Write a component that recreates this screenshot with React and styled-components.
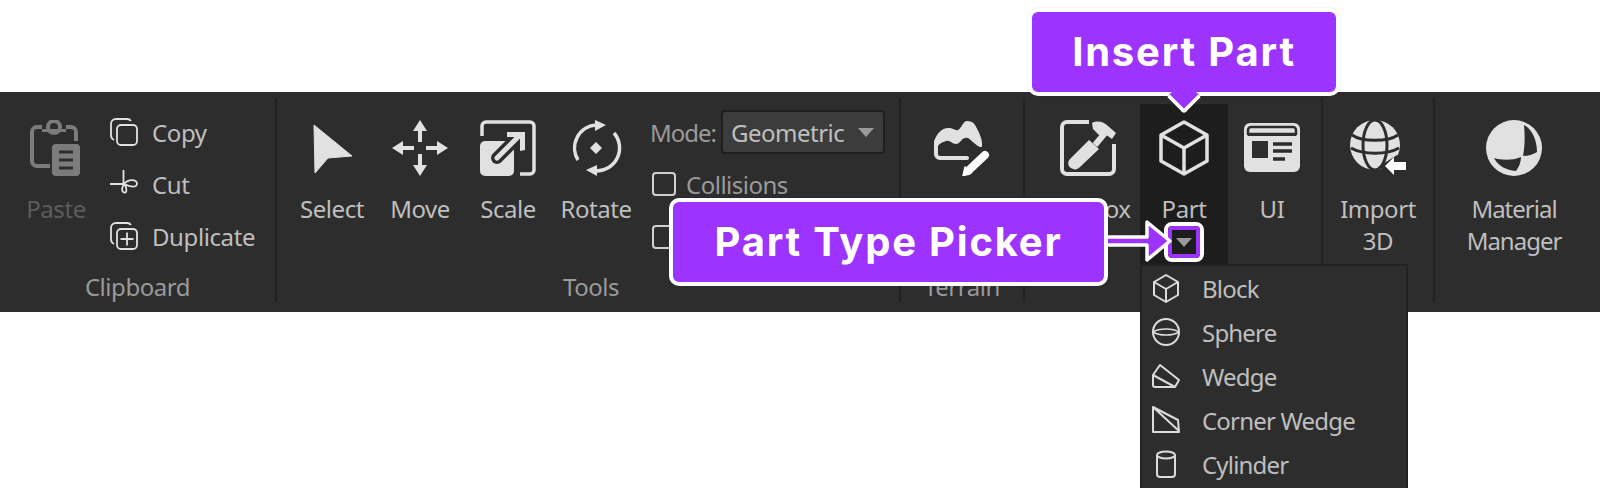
import React from "react";
import styled, {createGlobalStyle} from "styled-components";

const GlobalStyle = createGlobalStyle`
  html, body {
    margin: 0;
    background: #fff;
  }
`

const UI_FONT = `"Noto Sans", "Open Sans", sans-serif`;
const PURPLE = "#9c33ff";
const TEXT = "#bfbfbf";

const Page = styled.div`
  position: relative;
  width: 1600px;
  height: 488px;
  overflow: hidden;
  padding-top: 92px;
  box-sizing: border-box;
  font-family: ${UI_FONT};
`
const Ribbon = styled.div`
  display: flex;
  height: 220px;
  background: #2d2d2d;
`
const Group = styled.section`
  display: flex;
  flex-direction: column;
  justify-content: space-between;
  width: ${p => p.$width}px;
  flex: none;
`
const Divider = styled.div`
  flex: none;
  width: 2px;
  margin: 6px 0 10px;
  background: #222;
`
const GroupRow = styled.div`
  display: flex;
  padding-left: ${p => p.$left || 0}px;
`
const GroupLabel = styled.div`
  height: 30px;
  margin-bottom: 10px;
  padding-left: ${p => p.$shift || 0}px;
  text-align: center;
  font-size: 24px;
  line-height: 30px;
  letter-spacing: -0.45px;
  color: #9a9a9a;
`
const Tool = styled.div`
  display: flex;
  flex-direction: column;
  align-items: center;
  flex: none;
  box-sizing: border-box;
  width: ${p => p.$width || 88}px;
  height: ${p => (p.$active ? 160 : 172)}px;
  margin: ${p => (p.$active ? "12px 0 0" : "0")};
  padding-top: ${p => (p.$active ? 16 : 28)}px;
  margin-right: ${p => p.$gap || 0}px;
  background: ${p => (p.$active ? "#1d1d1d" : "transparent")};
`
const ToolIcon = styled.svg`
  display: block;
  flex: none;
  width: 56px;
  height: 56px;
  color: ${p => (p.$dim ? "#7c7c7c" : "#e1e1e1")};
`
const ToolText = styled.div`
  margin-top: 17px;
  text-align: center;
  font-size: 24px;
  line-height: 32px;
  letter-spacing: ${p => (p.$tight ? "-1px" : "-0.45px")};
  white-space: pre-line;
  color: ${p => (p.$dim ? "#5c5c5c" : TEXT)};
`
const ClipList = styled.div`
  display: flex;
  flex-direction: column;
  gap: 24px;
  margin: 26px 0 0 14px;
`
const ClipItem = styled.div`
  display: flex;
  align-items: center;
  gap: 14px;
  height: 28px;
  font-size: 24px;
  letter-spacing: -0.4px;
  color: ${TEXT};
`
const SmallIcon = styled.svg`
  display: block;
  flex: none;
  width: 28px;
  height: 28px;
  color: #e1e1e1;
`
const Settings = styled.div`
  display: flex;
  flex-direction: column;
  margin: 18px 0 0 10px;
`
const ModeRow = styled.div`
  display: flex;
  align-items: center;
  gap: 5px;
  height: 44px;
  font-size: 24px;
  letter-spacing: -1px;
  color: #9a9a9a;
`
const ModeSelect = styled.div`
  display: flex;
  align-items: center;
  justify-content: space-between;
  box-sizing: border-box;
  width: 164px;
  height: 44px;
  padding: 0 9px 0 8px;
  background: #3c3c3c;
  border: 2px solid #1f1f1f;
  border-radius: 4px;
  letter-spacing: -0.5px;
  color: ${TEXT};
`
const Caret = styled.span`
  width: 0;
  height: 0;
  border-left: 8px solid transparent;
  border-right: 8px solid transparent;
  border-top: 9px solid #999;
`
const CheckRow = styled.div`
  display: flex;
  align-items: center;
  gap: 10px;
  height: 28px;
  margin: ${p => (p.$first ? "16px" : "25px")} 0 0 2px;
  font-size: 24px;
  letter-spacing: -0.5px;
  color: #9a9a9a;
`
const CheckBox = styled.span`
  box-sizing: border-box;
  width: 24px;
  height: 24px;
  border: 2px solid #d0d0d0;
  border-radius: 4px;
`
const Menu = styled.div`
  position: absolute;
  left: 1140px;
  top: 264px;
  box-sizing: border-box;
  width: 268px;
  height: 230px;
  background: #2d2d2d;
  border: 2px solid #222;
`
const MenuItem = styled.div`
  display: flex;
  align-items: center;
  height: 44px;
  font-size: 24px;
  letter-spacing: -0.8px;
  color: ${TEXT};
`
const MenuIcon = styled.svg`
  flex: none;
  width: 32px;
  height: 32px;
  margin: 0 20px 0 8px;
  color: #dcdcdc;
`
const Callout = styled.div`
  position: absolute;
  left: ${p => p.$left}px;
  top: ${p => p.$top}px;
  display: flex;
  align-items: center;
  justify-content: center;
  box-sizing: border-box;
  width: ${p => p.$width}px;
  height: 88px;
  padding-bottom: 2px;
  background: ${PURPLE};
  border: 4px solid #fff;
  border-radius: 10px;
  box-shadow: 0 0 2px rgba(0, 0, 0, 0.15);
  font-family: Inter, "Liberation Sans", sans-serif;
  font-weight: 700;
  font-size: 40px;
  letter-spacing: 1.8px;
  color: #fff;
`
const Pointer = styled.span`
  position: absolute;
  left: 50%;
  bottom: -17px;
  box-sizing: border-box;
  width: 24px;
  height: 24px;
  margin-left: -12px;
  background: ${PURPLE};
  border-right: 4px solid #fff;
  border-bottom: 4px solid #fff;
  border-bottom-right-radius: 4px;
  transform: rotate(45deg);
`
const PickerRing = styled.div`
  position: absolute;
  left: 1164px;
  top: 222px;
  box-sizing: border-box;
  width: 40px;
  height: 40px;
  border: 4px solid #fff;
  border-radius: 8px;
  overflow: hidden;
`
const PickerInner = styled.div`
  display: flex;
  align-items: center;
  justify-content: center;
  box-sizing: border-box;
  height: 100%;
  background: #1d1d1d;
  border: 4px solid ${PURPLE};
  border-radius: 4px;
`
const LeadArrow = styled.svg`
  position: absolute;
  left: 1100px;
  top: 214px;
  width: 76px;
  height: 56px;
`

function Paste() {
    return (
        <ToolIcon $dim viewBox="0 0 56 56" fill="none">
            <path d="M14 7H9a5 5 0 0 0-5 5v29a5 5 0 0 0 5 5h13M38 7h5a5 5 0 0 1 5 5v9" stroke="currentColor" strokeWidth="4"/>
            <circle cx="26" cy="7" r="6" stroke="currentColor" strokeWidth="4"/>
            <path d="M14 9h24v3H14z" fill="currentColor"/>
            <rect x="24" y="24" width="28" height="32" rx="4" fill="currentColor"/>
            <path d="M31 32h14M31 40h14M31 48h14" stroke="#2d2d2d" strokeWidth="3"/>
        </ToolIcon>
    )
}

function SelectArrow() {
    return (
        <ToolIcon viewBox="0 0 56 56">
            <path d="M10 5 48 36 24 38 11 53Z" fill="currentColor" stroke="currentColor" strokeWidth="1" strokeLinejoin="round"/>
        </ToolIcon>
    )
}

function MoveArrows() {
    return (
        <ToolIcon viewBox="0 0 56 56" fill="currentColor">
            <path d="M28 0l7 11h-5v11h-4V11h-5z"/>
            <path d="M28 56l-7-11h5V34h4v11h5z"/>
            <path d="M0 28l11-7v5h11v4H11v5z"/>
            <path d="M56 28l-11 7v-5H34v-4h11v-5z"/>
        </ToolIcon>
    )
}

function ScaleBox() {
    return (
        <ToolIcon viewBox="0 0 56 56" fill="none">
            <path d="M2 16V6a4 4 0 0 1 4-4h44a4 4 0 0 1 4 4v44a4 4 0 0 1-4 4h-10" stroke="currentColor" strokeWidth="3.5"/>
            <rect x="0" y="21" width="34" height="35" rx="5" fill="currentColor"/>
            <path d="M17 38 38 17" stroke="#2d2d2d" strokeWidth="12" strokeLinecap="round"/>
            <path d="M17 38 40 15" stroke="currentColor" strokeWidth="5" strokeLinecap="round"/>
            <path d="M27 12h18v18l-5 1V17H27z" fill="currentColor"/>
        </ToolIcon>
    )
}

function RotateRing() {
    return (
        <ToolIcon viewBox="0 0 56 56" fill="none">
            <path d="M10 40A23 23 0 0 1 28 5" stroke="currentColor" strokeWidth="3.5"/>
            <path d="M46 13A23 23 0 0 1 28 51" stroke="currentColor" strokeWidth="3.5"/>
            <path d="M27 0l11 5-11 6z" fill="currentColor"/>
            <path d="M29 45l-11 5 11 6z" fill="currentColor"/>
            <path d="M28 22l6 6-6 6-6-6z" fill="currentColor"/>
        </ToolIcon>
    )
}

function TerrainPen() {
    return (
        <ToolIcon viewBox="0 0 56 56" fill="none">
            <path d="M0 22C2 14 8 8 14 8s7 3 10 2 5-9 9-9 6 1 8 4 7 13 7 18v4c-4 0-5-2-8-4s-5-6-9-5-5 6-9 6-6-4-10-3-7 3-8 5z" fill="currentColor"/>
            <path d="M2 22v12a4 4 0 0 0 4 4h27" stroke="currentColor" strokeWidth="4" strokeLinecap="round"/>
            <path d="M34 51 51 35" stroke="#fff" strokeWidth="8" strokeLinecap="round"/>
            <path d="M29 56l2-9 6 6z" fill="#fff" stroke="#fff" strokeWidth="1.500" strokeLinejoin="round"/>
        </ToolIcon>
    )
}

function ToolboxHammer() {
    return (
        <ToolIcon viewBox="0 0 56 56" fill="none">
            <path d="M29 2H7a5 5 0 0 0-5 5v42a5 5 0 0 0 5 5h42a5 5 0 0 0 5-5V24" stroke="currentColor" strokeWidth="4"/>
            <path d="M10 39 29 20 39 29 20 47c-3 3-6 3-9 1s-4-6-1-9z" fill="currentColor"/>
            <path d="M35 25 45 13" stroke="currentColor" strokeWidth="6"/>
            <path d="M32 3c6-3 12-1 16 3l8 7-4 6-7-5-5 2-7-7z" fill="currentColor"/>
        </ToolIcon>
    )
}

function PartCube() {
    return (
        <ToolIcon viewBox="0 0 56 56" fill="none" stroke="currentColor" strokeWidth="3.5" strokeLinejoin="round">
            <path d="M28 2 51 15V41L28 54 5 41V15Z"/>
            <path d="M5 15 28 28 51 15M28 28V54"/>
        </ToolIcon>
    )
}

function WindowCard() {
    return (
        <ToolIcon viewBox="0 0 56 56">
            <rect x="0" y="3" width="56" height="49" rx="6" fill="currentColor"/>
            <path d="M4 14V10a3 3 0 0 1 3-3h42a3 3 0 0 1 3 3v4z" fill="none" stroke="#2d2d2d" strokeWidth="2.500"/>
            <path d="M4 15h48" stroke="#2d2d2d" strokeWidth="2"/>
            <rect x="8" y="21" width="16" height="17" fill="#2d2d2d"/>
            <path d="M29 24h19M29 31h19M29 39h12" stroke="#2d2d2d" strokeWidth="3.500"/>
        </ToolIcon>
    )
}

function GlobeImport() {
    return (
        <ToolIcon viewBox="0 0 56 56" fill="none">
            <circle cx="25" cy="25" r="25" fill="currentColor"/>
            <ellipse cx="25" cy="25" rx="12" ry="25" stroke="#2d2d2d" strokeWidth="3"/>
            <path d="M2 15c10 7 36 7 46 0M1 28c12 7 36 7 48 0" stroke="#2d2d2d" strokeWidth="3"/>
            <path d="M28 47 47 35l9 4-8 18z" fill="#2d2d2d"/>
            <path d="M35 46l9-9v5h12v8H44v5z" fill="#fff"/>
        </ToolIcon>
    )
}

function MaterialBall() {
    return (
        <ToolIcon viewBox="0 0 56 56">
            <circle cx="28" cy="28" r="28" fill="currentColor"/>
            <path d="M38 5c8 4 13 15 13 27-5 3-9 4-14 4 2-10 2-21 1-31z" fill="#2d2d2d"/>
            <path d="M8 38c6 2 18 3 27-1 0 5-2 10-5 14-10-1-18-5-22-13z" fill="#2d2d2d"/>
        </ToolIcon>
    )
}

function CopyIcon() {
    return (
        <SmallIcon viewBox="0 0 28 28" fill="none" stroke="currentColor" strokeWidth="1.800">
            <path d="M21 3c-1-1.500-2-2-4-2H6C3 1 1 3 1 6v11c0 2 1 4 3 5"/>
            <rect x="7" y="7" width="20" height="20" rx="4"/>
        </SmallIcon>
    )
}

function CutIcon() {
    return (
        <SmallIcon viewBox="0 0 28 28" fill="none" stroke="currentColor" strokeWidth="1.800">
            <path d="M13.500 0v14M0 14h14c4-5 13-5 13-.500s-7 3.500-13 .500c-2 3-3 7 0 8.500 3 1 3.500-5 0-8.500"/>
        </SmallIcon>
    )
}

function DuplicateIcon() {
    return (
        <SmallIcon viewBox="0 0 28 28" fill="none" stroke="currentColor" strokeWidth="1.800">
            <path d="M21 3c-1-1.500-2-2-4-2H6C3 1 1 3 1 6v11c0 2 1 4 3 5"/>
            <rect x="7" y="7" width="20" height="20" rx="4"/>
            <path d="M17 10.500v13M10.500 17h13"/>
        </SmallIcon>
    )
}

const menuIcons = {
    Block: (
        <>
            <path d="M16 3 28 10V23L16 30 4 23V10Z"/>
            <path d="M4 10 16 17 28 10M16 17V30"/>
        </>
    ),
    Sphere: (
        <>
            <circle cx="16" cy="16" r="13"/>
            <path d="M3 16c6-4 20-4 26 0M3 16c6 4 20 4 26 0" strokeWidth="1.600"/>
        </>
    ),
    Wedge: <path d="M3 15 10 5 29 20 25 27H5a2 2 0 0 1-2-2V15ZM3 15 25 27"/>,
    "Corner Wedge": <path d="M3 3V28H29L28 16 3 3ZM3 3 29 27"/>,
    Cylinder: (
        <>
            <ellipse cx="16" cy="7" rx="9" ry="3.500"/>
            <path d="M7 7V26a3 3 0 0 0 3 3H22a3 3 0 0 0 3-3V7"/>
        </>
    ),
}

function PartMenu() {
    return (
        <Menu>
            {Object.keys(menuIcons).map(name => (
                <MenuItem key={name}>
                    <MenuIcon viewBox="0 0 32 32" fill="none" stroke="currentColor" strokeWidth="2" strokeLinejoin="round">
                        {menuIcons[name]}
                    </MenuIcon>
                    {name}
                </MenuItem>
            ))}
        </Menu>
    )
}

export default function App() {
    return (
        <Page>
            <GlobalStyle/>
            <Ribbon>
                <Group $width={275}>
                    <GroupRow $left={16}>
                        <Tool $width={80}>
                            <Paste/>
                            <ToolText $dim>Paste</ToolText>
                        </Tool>
                        <ClipList>
                            <ClipItem><CopyIcon/>Copy</ClipItem>
                            <ClipItem><CutIcon/>Cut</ClipItem>
                            <ClipItem><DuplicateIcon/>Duplicate</ClipItem>
                        </ClipList>
                    </GroupRow>
                    <GroupLabel>Clipboard</GroupLabel>
                </Group>
                <Divider/>
                <Group $width={622}>
                    <GroupRow $left={11}>
                        <Tool><SelectArrow/><ToolText>Select</ToolText></Tool>
                        <Tool><MoveArrows/><ToolText>Move</ToolText></Tool>
                        <Tool><ScaleBox/><ToolText>Scale</ToolText></Tool>
                        <Tool><RotateRing/><ToolText>Rotate</ToolText></Tool>
                        <Settings>
                            <ModeRow>Mode:
                                <ModeSelect>Geometric<Caret/></ModeSelect>
                            </ModeRow>
                            <CheckRow $first><CheckBox/>Collisions</CheckRow>
                            <CheckRow><CheckBox/>Join Surfaces</CheckRow>
                        </Settings>
                    </GroupRow>
                    <GroupLabel $shift={6}>Tools</GroupLabel>
                </Group>
                <Divider/>
                <Group $width={122}>
                    <GroupRow>
                        <Tool $width={122}><TerrainPen/><ToolText>Editor</ToolText></Tool>
                    </GroupRow>
                    <GroupLabel>Terrain</GroupLabel>
                </Group>
                <Divider/>
                <Group $width={296}>
                    <GroupRow $left={19}>
                        <Tool $gap={8}><ToolboxHammer/><ToolText>Toolbox</ToolText></Tool>
                        <Tool $active><PartCube/><ToolText>Part</ToolText></Tool>
                        <Tool><WindowCard/><ToolText>UI</ToolText></Tool>
                    </GroupRow>
                </Group>
                <Divider/>
                <Group $width={110}>
                    <GroupRow>
                        <Tool $width={110}><GlobeImport/><ToolText>{"Import\n3D"}</ToolText></Tool>
                    </GroupRow>
                </Group>
                <Divider/>
                <Group $width={158}>
                    <GroupRow>
                        <Tool $width={158}><MaterialBall/><ToolText $tight>{"Material\nManager"}</ToolText></Tool>
                    </GroupRow>
                </Group>
            </Ribbon>
            <PartMenu/>
            <Callout $left={1028} $top={8} $width={312}>
                Insert Part
                <Pointer/>
            </Callout>
            <PickerRing>
                <PickerInner><Caret/></PickerInner>
            </PickerRing>
            <LeadArrow viewBox="0 0 76 56">
                <path d="M4 23H47V8L70 27 47 46V31H4Z" fill={PURPLE} stroke="#fff" strokeWidth="3.500" strokeLinejoin="round"/>
            </LeadArrow>
            <Callout $left={669} $top={198} $width={439}>Part Type Picker</Callout>
        </Page>
    )
}
